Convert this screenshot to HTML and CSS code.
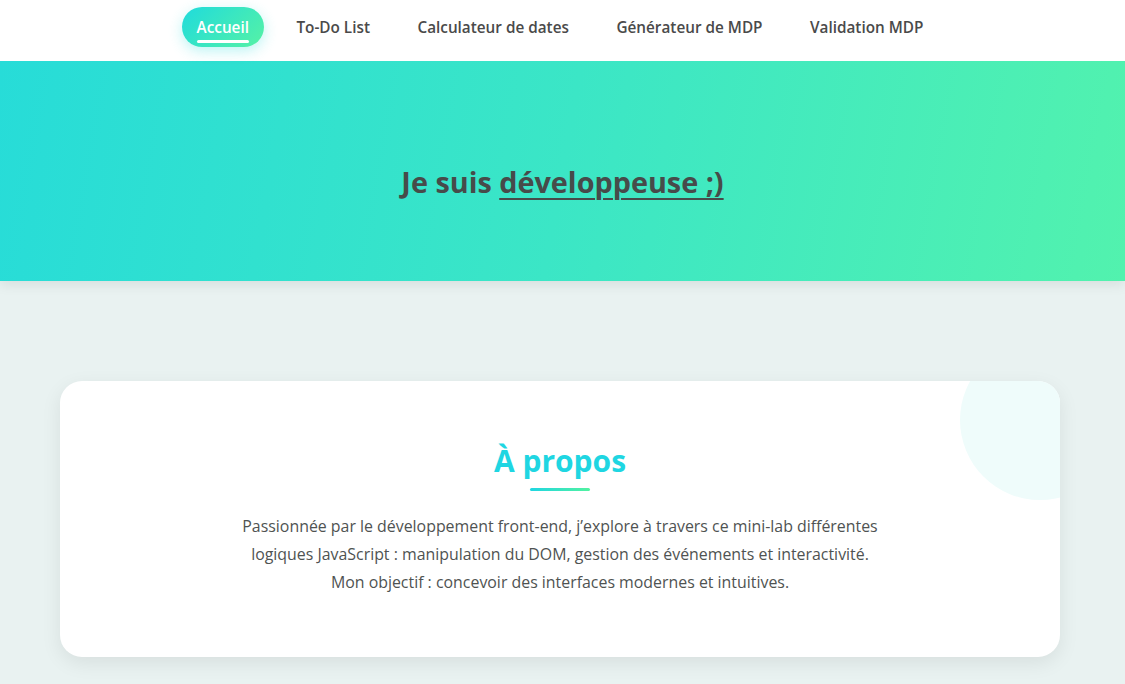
FILE: index.html
```html
<!DOCTYPE html>
<html lang="fr">
<head>
<meta charset="utf-8">
<title>Mini-lab</title>
<link rel="stylesheet" href="styles.css">
</head>
<body>
<header class="navbar">
  <nav class="nav">
    <a class="nav-link active" href="#">Accueil</a>
    <a class="nav-link" href="#">To-Do List</a>
    <a class="nav-link" href="#">Calculateur de dates</a>
    <a class="nav-link" href="#">Générateur de MDP</a>
    <a class="nav-link" href="#">Validation MDP</a>
  </nav>
</header>
<section class="hero">
  <h1 class="hero-title">Je suis <span class="hero-accent">développeuse ;)</span></h1>
</section>
<main class="main">
  <section class="card">
    <div class="card-deco"></div>
    <h2 class="card-title">À propos</h2>
    <div class="card-bar"></div>
    <p class="card-text">Passionnée par le développement front-end, j’explore à travers ce mini-lab différentes logiques JavaScript : manipulation du DOM, gestion des événements et interactivité.<br>Mon objectif : concevoir des interfaces modernes et intuitives.</p>
  </section>
</main>
</body>
</html>
```

FILE: styles.css
```css
* { box-sizing: border-box; }
html, body { margin: 0; padding: 0; }
body {
  font-family: "Open Sans", "Noto Sans", sans-serif;
  background: #e9f2f1;
  color: #4a4a4a;
  min-height: 684px;
  overflow: hidden;
}
.navbar {
  background: #ffffff;
  height: 61px;
  padding-top: 7px;
  display: flex;
  align-items: flex-start;
  justify-content: center;
  position: relative;
  z-index: 2;
}
.nav {
  display: flex;
  gap: 17.5px;
  align-items: center;
  margin-left: -5px;
}
.nav-link {
  position: relative;
  display: block;
  padding: 0 15px;
  height: 40px;
  line-height: 40px;
  border-radius: 20px;
  font-size: 15.3px;
  font-weight: 600;
  color: #4a4a4a;
  text-decoration: none;
  white-space: nowrap;
}
.nav-link.active {
  color: #ffffff;
  background: linear-gradient(135deg, #1fdbdc, #56f2a5);
  box-shadow: 0 4px 14px rgba(34, 219, 217, 0.3);
}
.nav-link.active::after {
  content: "";
  position: absolute;
  left: 15px;
  right: 15px;
  bottom: 4px;
  height: 3px;
  border-radius: 2px;
  background: #ffffff;
}
.hero {
  height: 220px;
  background: linear-gradient(100deg, #27dcd8 0%, #3be6c6 50%, #52f2ae 100%);
  display: flex;
  align-items: center;
  justify-content: center;
  box-shadow: 0 4px 12px rgba(0, 0, 0, 0.08);
  position: relative;
  z-index: 1;
}
.hero-title {
  margin: 20px 0 0;
  font-size: 28.8px;
  font-weight: 700;
  color: #474b4a;
}
.hero-accent {
  text-decoration: underline;
  text-decoration-thickness: 2px;
  text-underline-offset: 5px;
}
.main {
  padding: 100px 60px 40px 60px;
  display: flex;
  justify-content: flex-start;
}
.card {
  position: relative;
  overflow: hidden;
  width: 1000px;
  flex: none;
  background: #ffffff;
  border-radius: 22px;
  box-shadow: 0 6px 20px rgba(0, 0, 0, 0.08);
  padding: 60px 60px 61px;
  display: flex;
  flex-direction: column;
  align-items: center;
}
.card-deco {
  position: absolute;
  width: 160px;
  height: 160px;
  border-radius: 50%;
  background: #effcfb;
  right: -60px;
  top: -41px;
}
.card-title {
  margin: 0;
  font-size: 30px;
  line-height: 40px;
  font-weight: 700;
  color: #1fd6e2;
}
.card-bar {
  width: 60px;
  height: 3px;
  border-radius: 2px;
  margin-top: 7px;
  background: linear-gradient(90deg, #1fd6e2, #52f2a0);
}
.card-text {
  margin: 21px 0 0;
  max-width: 660px;
  text-align: center;
  font-size: 15.9px;
  line-height: 28px;
  color: #4f5352;
}
```
